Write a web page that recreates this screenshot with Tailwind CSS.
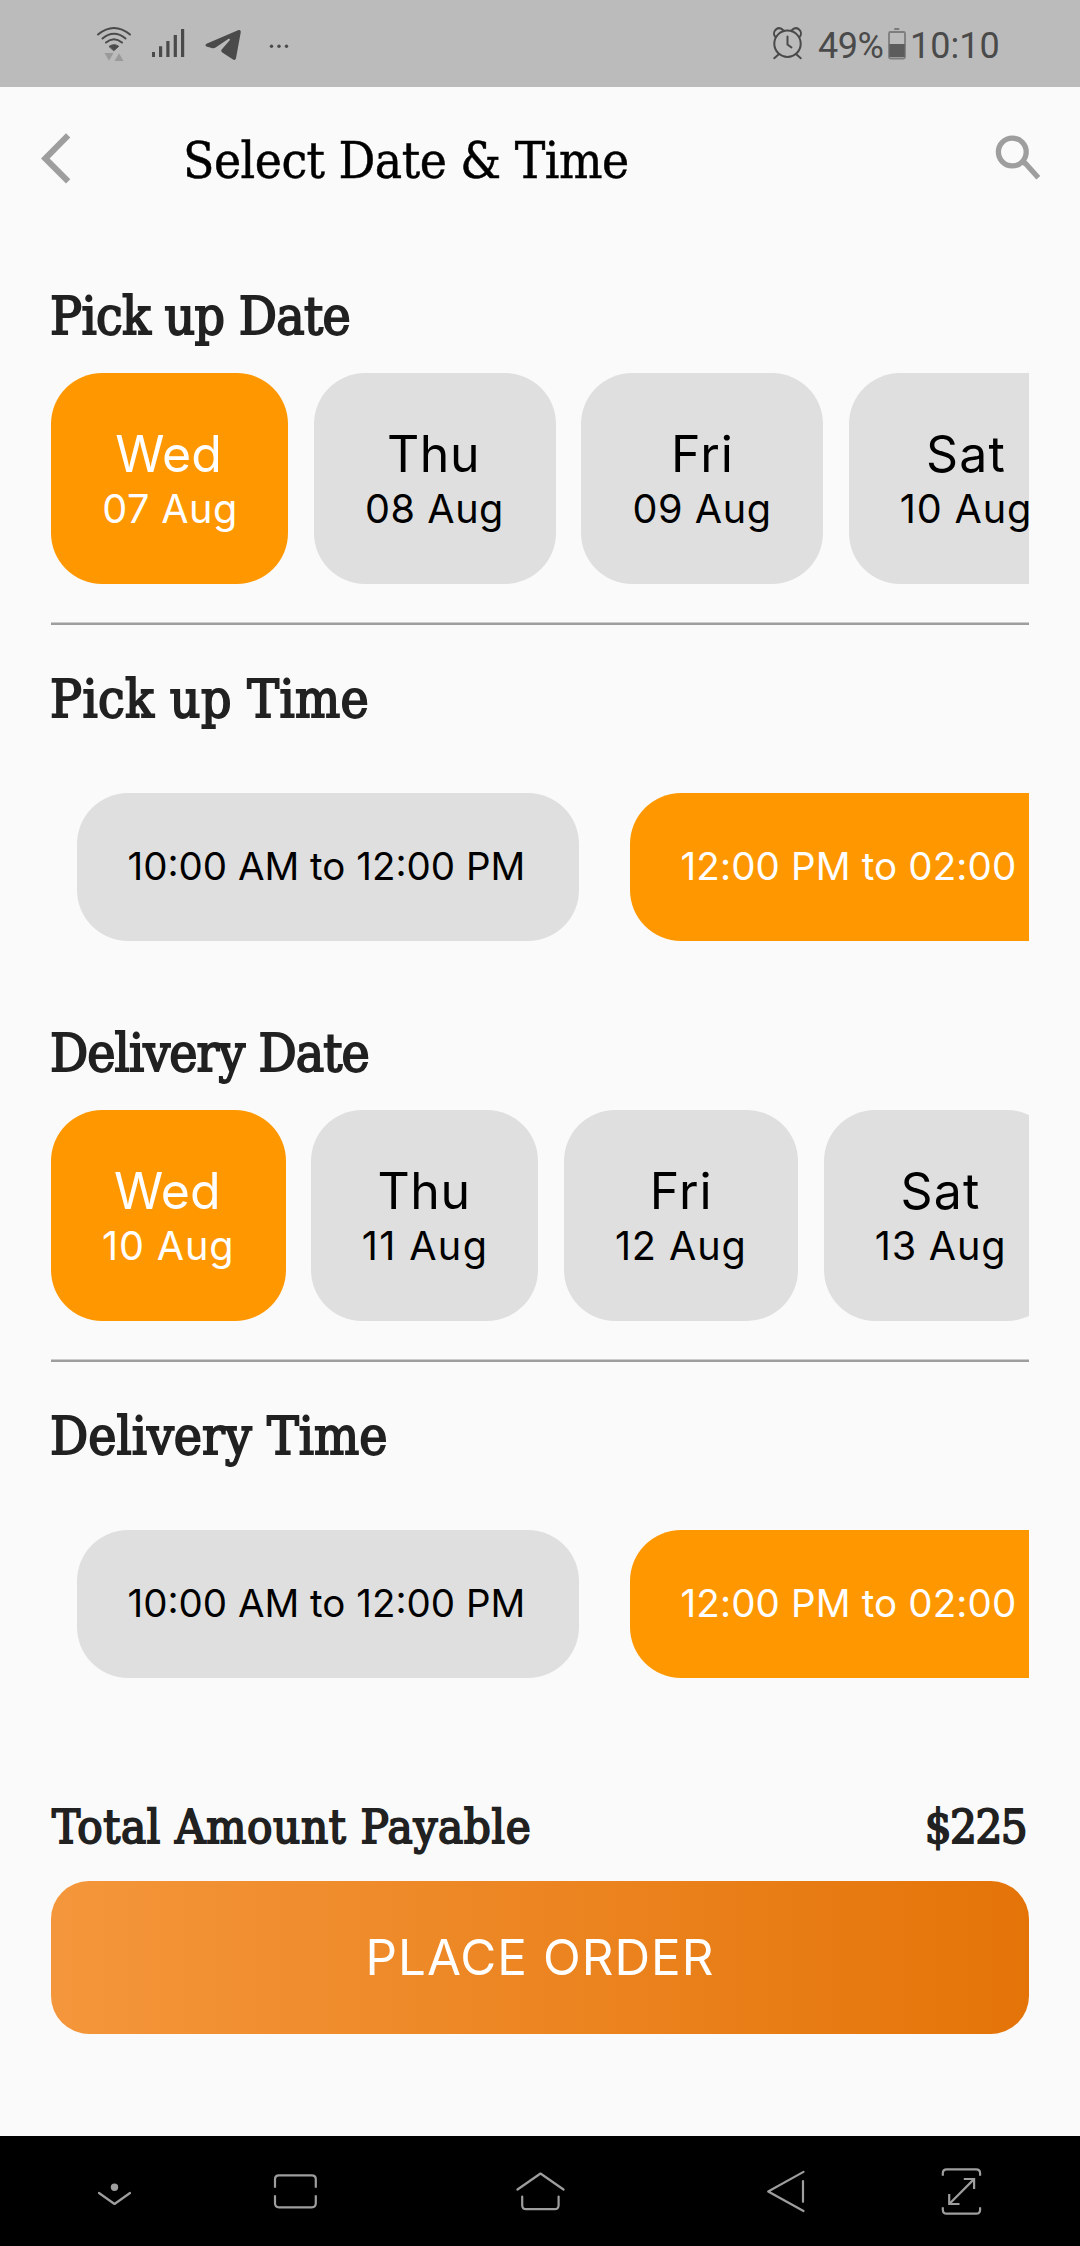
<!DOCTYPE html>
<html lang="en">
<head>
<meta charset="utf-8">
<title>Select Date &amp; Time</title>
<script src="https://cdn.jsdelivr.net/npm/@tailwindcss/browser@4"></script>
</head>
<body class="bg-[#fafafa]">
<div class="flex h-[2246px] w-[1080px] flex-col overflow-hidden bg-[#fafafa] font-['Inter',sans-serif] text-black">

  <!-- Status bar -->
  <div class="flex h-[87px] shrink-0 justify-between bg-[#bbbbbb] pl-[96px] pr-[80px] text-[#4a4a4a]">
    <div class="flex">
      <svg class="h-[87px] w-[36px]" viewBox="96 0 36 87" fill="none" stroke="currentColor" stroke-width="2" stroke-linecap="round">
        <path d="M98 34.500Q114 21.500 130 34.500M102.500 38.500Q114 29 125.500 38.500M106 42.500Q114 36 122 42.500"/>
        <path d="M109.300 46.300Q114 43 118.700 46.300L114 50.500Z" fill="currentColor" stroke-width="1"/>
        <path d="M104.500 53h9l-4.500 7.700zM114.500 61h9l-4.500-7.700z" fill="#9a9a9a" stroke="none"/>
      </svg>
      <svg class="ml-[19px] h-[87px] w-[34px]" viewBox="151 0 34 87" fill="currentColor">
        <path d="M152 52h3v5h-3zM159 46.300h3.200V57H159zM166.300 41h3.200v16h-3.200zM173.700 35h3.200v22h-3.200zM181 29h3.200v28H181z"/>
      </svg>
      <svg class="ml-[20px] h-[87px] w-[36px]" viewBox="205 0 36 87" fill="currentColor">
        <path d="M206.500 43.700L238.600 30.100Q241.200 29.600 240.700 32.500L236 58.300Q235.400 60.700 233 59.500L222.300 52.600Q220.500 51.200 221.700 49.600L229.700 40.300Q230.400 38.400 228.600 38.800L216 47.300Q214.500 48.500 212.500 48.300L206.500 46.500Q204.500 45.200 206.500 43.700Z"/>
      </svg>
      <svg class="ml-[28px] h-[87px] w-[22px]" viewBox="269 0 22 87" fill="currentColor">
        <circle cx="271.500" cy="46.300" r="1.700"/><circle cx="279" cy="46.300" r="1.700"/><circle cx="286.500" cy="46.300" r="1.700"/>
      </svg>
    </div>
    <div class="flex items-start font-['Roboto',sans-serif] text-[36px] leading-[92px]">
      <svg class="mr-[14px] h-[87px] w-[32px]" viewBox="772 0 32 87" fill="none" stroke="currentColor" stroke-width="2" stroke-linecap="round">
        <circle cx="787.500" cy="43.700" r="13.200"/>
        <path d="M787.500 36.500v8l4 3M778.500 54.500l-4.300 3.700M796.500 54.500l4.300 3.700"/>
        <path d="M775 36.500C771.500 31 778.500 25 783.500 30.500M800 36.500C803.500 31 796.500 25 791.500 30.500"/>
      </svg>
      <span class="w-[69px] tracking-[-0.5px]">49%</span>
      <svg class="h-[87px] w-[20px]" viewBox="887 0 20 87">
        <rect x="894" y="28" width="5.500" height="2" rx="1" fill="#7a7a7a"/>
        <rect x="889" y="32" width="16" height="26.500" rx="1.500" fill="none" stroke="#7d7d7d" stroke-width="1.800"/>
        <rect x="889.300" y="44" width="15.400" height="13" fill="#5c5c5c"/>
      </svg>
      <span class="ml-[3px] w-[90px]">10:10</span>
    </div>
  </div>

  <!-- App bar -->
  <header class="flex h-[144px] shrink-0 items-center pl-[40px] pr-[39px]">
    <svg class="h-[144px] w-[32px]" viewBox="40 87 32 144" fill="#9e9e9e"><path d="M41 158.500L66 133.300L70.300 137.600L49.600 158.500L70.300 179.300L66 183.600Z"/></svg>
    <h1 class="ml-[111px] pt-[4px] font-['DejaVu_Serif_Condensed','DejaVu_Serif',serif] text-[51px] leading-[60px] tracking-[-0.5px] [-webkit-text-stroke:0.5px_#000]">Select Date &amp; Time</h1>
    <svg class="ml-auto h-[144px] w-[46px]" viewBox="995 87 46 144" fill="none" stroke="#9e9e9e" stroke-width="5.300">
      <circle cx="1012.300" cy="152" r="13.900"/><path d="M1022 162l3.500 1.500 12.800 14.300"/>
    </svg>
  </header>

  <main class="flex flex-col px-[51px] pt-[55px]">
    <section class="flex flex-col">
      <h2 class="-ml-px font-['DejaVu_Serif_Condensed','DejaVu_Serif',serif] text-[53px] leading-[60px] tracking-[-0.7px] text-[#212121] [-webkit-text-stroke:1.8px_#212121]">Pick up Date</h2>
      <div class="mt-[27px] flex gap-[25.5px] overflow-hidden whitespace-nowrap text-center">
        <div class="h-[211px] w-[237px] shrink-0 rounded-[51px] bg-[#ff9800] py-[51px] text-white">
          <div class="pr-[2px] text-[50px] leading-[60px]">Wed</div>
          <div class="pl-px text-[39.6px] leading-[51px] tracking-[0.45px]">07 Aug</div>
        </div>
        <div class="h-[211px] w-[242px] shrink-0 rounded-[51px] bg-[#dfdfdf] py-[51px]">
          <div class="pr-[2px] text-[50px] leading-[60px] tracking-[0.6px]">Thu</div>
          <div class="text-[39.6px] leading-[51px] tracking-[0.55px]">08 Aug</div>
        </div>
        <div class="h-[211px] w-[242px] shrink-0 rounded-[51px] bg-[#dfdfdf] py-[51px]">
          <div class="pl-px text-[50px] leading-[60px] tracking-[1px]">Fri</div>
          <div class="text-[39.6px] leading-[51px] tracking-[0.55px]">09 Aug</div>
        </div>
        <div class="h-[211px] w-[235px] shrink-0 rounded-[51px] bg-[#dfdfdf] py-[51px]">
          <div class="text-[50px] leading-[60px] tracking-[1.2px]">Sat</div>
          <div class="text-[39.6px] leading-[51px] tracking-[0.85px]">10 Aug</div>
        </div>
      </div>
      <div class="mt-[38px] h-[3px] border-t border-[#cccccc] bg-[#9e9e9e]"></div>
      <h2 class="-ml-px mt-[44px] font-['DejaVu_Serif_Condensed','DejaVu_Serif',serif] text-[53px] leading-[60px] tracking-[0.35px] text-[#212121] [-webkit-text-stroke:1.8px_#212121]">Pick up Time</h2>
      <div class="mt-[64px] flex gap-[51px] overflow-hidden whitespace-nowrap pl-[25.5px] text-[38.5px]">
        <div class="h-[148px] w-[502px] shrink-0 rounded-[51px] bg-[#dfdfdf] pl-[51px] leading-[146px]">10:00 AM to 12:00 PM</div>
        <div class="h-[148px] w-[502px] shrink-0 rounded-[51px] bg-[#ff9800] pl-[51px] leading-[146px] tracking-[0.15px] text-white">12:00 PM to 02:00 PM</div>
      </div>
    </section>

    <section class="mt-[82px] flex flex-col">
      <h2 class="-ml-px font-['DejaVu_Serif_Condensed','DejaVu_Serif',serif] text-[53px] leading-[60px] tracking-[-0.93px] text-[#212121] [-webkit-text-stroke:1.8px_#212121]">Delivery Date</h2>
      <div class="mt-[27px] flex gap-[25.5px] overflow-hidden whitespace-nowrap text-center">
        <div class="h-[211px] w-[234.500px] shrink-0 rounded-[51px] bg-[#ff9800] py-[51px] text-white">
          <div class="pr-[2px] text-[50px] leading-[60px]">Wed</div>
          <div class="text-[39.6px] leading-[51px] tracking-[0.85px]">10 Aug</div>
        </div>
        <div class="h-[211px] w-[227px] shrink-0 rounded-[51px] bg-[#dfdfdf] py-[51px]">
          <div class="pr-px text-[50px] leading-[60px] tracking-[0.6px]">Thu</div>
          <div class="pl-px text-[39.6px] leading-[51px] tracking-[1.4px]">11 Aug</div>
        </div>
        <div class="h-[211px] w-[234.500px] shrink-0 rounded-[51px] bg-[#dfdfdf] py-[51px]">
          <div class="pl-px text-[50px] leading-[60px] tracking-[1px]">Fri</div>
          <div class="text-[39.6px] leading-[51px] tracking-[0.9px]">12 Aug</div>
        </div>
        <div class="h-[211px] w-[234px] shrink-0 rounded-[51px] bg-[#dfdfdf] py-[51px]">
          <div class="text-[50px] leading-[60px] tracking-[1.2px]">Sat</div>
          <div class="text-[39.6px] leading-[51px] tracking-[0.8px]">13 Aug</div>
        </div>
      </div>
      <div class="mt-[38px] h-[3px] border-t border-[#cccccc] bg-[#9e9e9e]"></div>
      <h2 class="-ml-px mt-[44px] font-['DejaVu_Serif_Condensed','DejaVu_Serif',serif] text-[53px] leading-[60px] text-[#212121] [-webkit-text-stroke:1.8px_#212121]">Delivery Time</h2>
      <div class="mt-[64px] flex gap-[51px] overflow-hidden whitespace-nowrap pl-[25.5px] text-[38.5px]">
        <div class="h-[148px] w-[502px] shrink-0 rounded-[51px] bg-[#dfdfdf] pl-[51px] leading-[146px]">10:00 AM to 12:00 PM</div>
        <div class="h-[148px] w-[502px] shrink-0 rounded-[51px] bg-[#ff9800] pl-[51px] leading-[146px] tracking-[0.15px] text-white">12:00 PM to 02:00 PM</div>
      </div>
    </section>

    <div class="mt-[119px] flex justify-between pl-px pr-[3px] font-['DejaVu_Serif_Condensed','DejaVu_Serif',serif] text-[47px] leading-[60px] text-[#212121] [-webkit-text-stroke:1.8px_#212121]">
      <span class="tracking-[0.65px]">Total Amount Payable</span>
      <span class="tracking-[-1.6px]">$225</span>
    </div>
    <button class="mt-[24px] h-[153px] rounded-[38px] bg-linear-to-r/srgb from-[#f4963b] to-[#e47408] text-center text-[49.3px] tracking-[1.05px] text-white">PLACE ORDER</button>
  </main>

  <!-- System navigation -->
  <nav class="mt-auto flex h-[110px] shrink-0 bg-black pl-[96px]">
    <svg class="h-[110px] w-[37px]" viewBox="96 2136 37 110" fill="none" stroke="#9e9e9e" stroke-width="2.200" stroke-linecap="round" stroke-linejoin="round">
      <path d="M99 2193l15.500 11 15.500-11"/><circle cx="114.500" cy="2187.300" r="3.700" fill="#9e9e9e" stroke="none"/>
    </svg>
    <svg class="ml-[140px] h-[110px] w-[45px]" viewBox="273 2136 45 110" fill="none" stroke="#9e9e9e" stroke-width="2.200">
      <path d="M275 2187.700v-8.400q0-4 4-4h32.800q4 0 4 4v8.400M275 2195.300v8q0 4 4 4h32.800q4 0 4-4v-8"/>
    </svg>
    <svg class="ml-[197px] h-[110px] w-[50px]" viewBox="515 2136 50 110" fill="none" stroke="#9e9e9e" stroke-width="2.200" stroke-linecap="round" stroke-linejoin="round">
      <path d="M517.500 2189.500l23-16 23 16M522.200 2196.500v8.700q0 4 4 4h28.400q4 0 4-4v-8.700"/>
    </svg>
    <svg class="ml-[201px] h-[110px] w-[40px]" viewBox="766 2136 40 110" fill="none" stroke="#9e9e9e" stroke-width="2.200" stroke-linecap="round" stroke-linejoin="round">
      <path d="M803.500 2171.900L768.200 2191.500L803.500 2211M803 2181v20.800"/>
    </svg>
    <svg class="ml-[135px] h-[110px] w-[42px]" viewBox="941 2136 42 110" fill="none" stroke="#9e9e9e" stroke-width="2.200">
      <path d="M942.800 2175.700v-2.400q0-4 4-4h29.300q4 0 4 4v2.400M942.800 2207.300v2.400q0 4 4 4h29.300q4 0 4-4v-2.400M949 2204.200l25.300-25.300M963.800 2179h10.300v10M949.200 2194v10h10.300"/>
    </svg>
  </nav>
</div>
</body>
</html>
